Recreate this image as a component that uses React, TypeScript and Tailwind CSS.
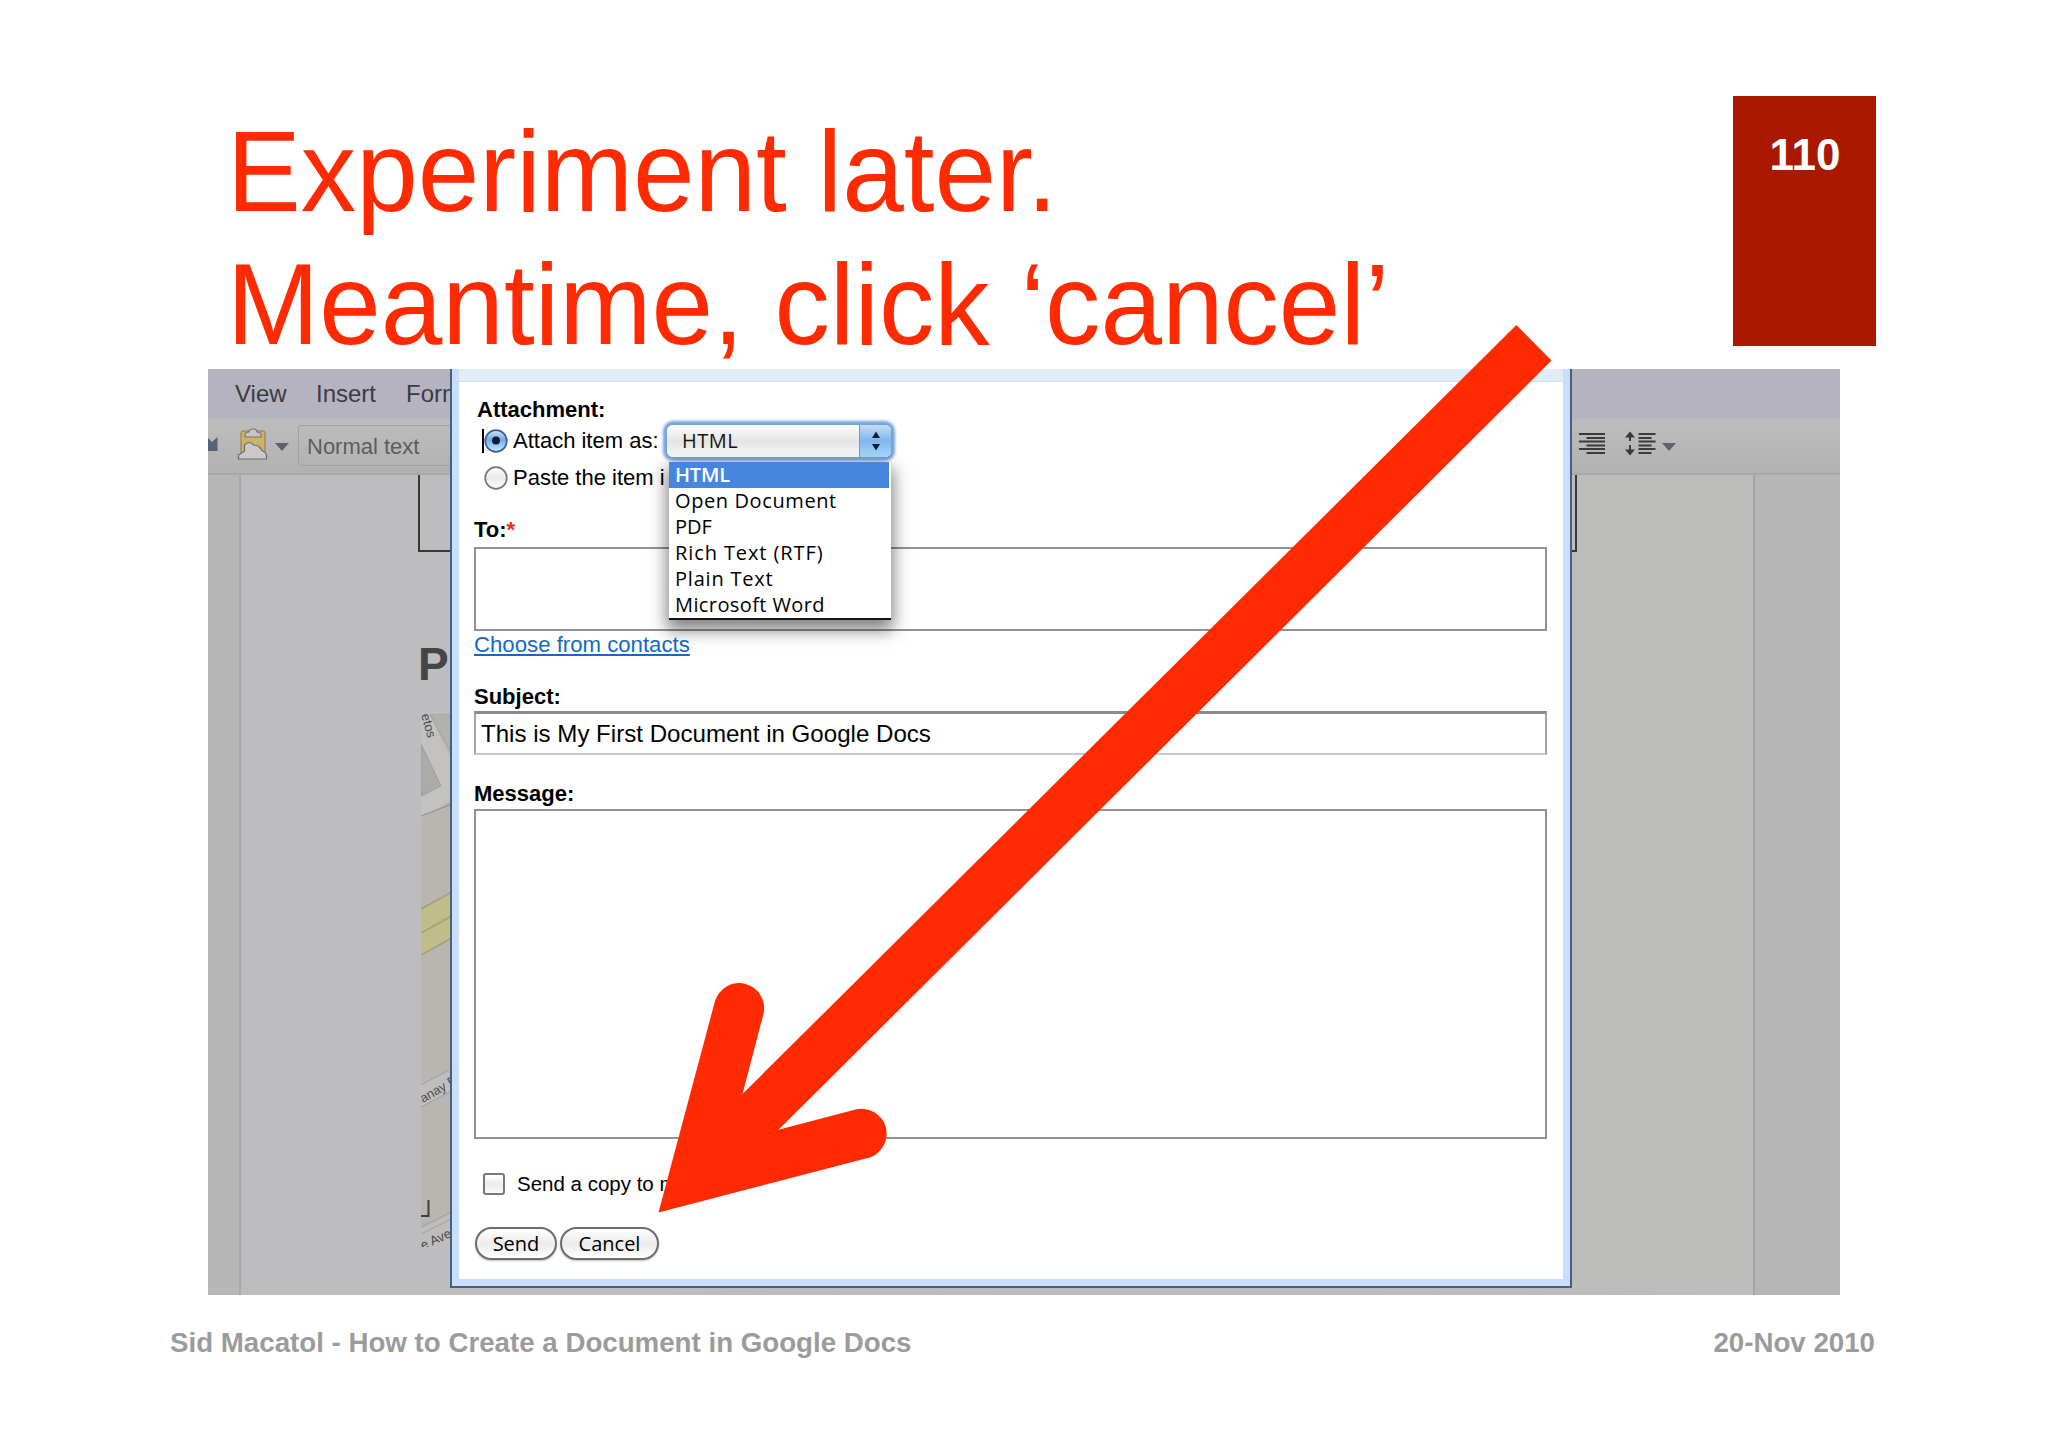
import React from "react";

interface FieldLabelProps {
  children: React.ReactNode;
  className?: string;
}

const FORMATS = [
  "HTML",
  "Open Document",
  "PDF",
  "Rich Text (RTF)",
  "Plain Text",
  "Microsoft Word",
];

const FORMAT_SPACING = [
  "tracking-[-0.2px]",
  "tracking-[0.6px]",
  "tracking-[0px]",
  "tracking-[0.9px]",
  "tracking-[0.8px]",
  "tracking-[0.4px]",
];

const FieldLabel: React.FC<FieldLabelProps> = ({ children, className }) => (
  <div
    className={`h-[26px] text-[22px] leading-[26px] font-bold text-black ${className ?? ""}`}
  >
    {children}
  </div>
);

const Radio: React.FC<{ checked?: boolean }> = ({ checked }) => (
  <svg width="26" height="26" viewBox="0 0 26 26" className="shrink-0">
    <defs>
      <linearGradient id="radioOn" x1="0" y1="0" x2="0" y2="1">
        <stop offset="0" stopColor="#d3e4f8" />
        <stop offset="0.45" stopColor="#6fabe8" />
        <stop offset="1" stopColor="#c4f0ff" />
      </linearGradient>
      <linearGradient id="radioOff" x1="0" y1="0" x2="0" y2="1">
        <stop offset="0" stopColor="#ffffff" />
        <stop offset="0.5" stopColor="#e9e9e9" />
        <stop offset="1" stopColor="#ffffff" />
      </linearGradient>
    </defs>
    <circle
      cx="13"
      cy="13"
      r="10.8"
      fill={checked ? "url(#radioOn)" : "url(#radioOff)"}
      stroke={checked ? "#44608e" : "#777777"}
      strokeWidth="1.7"
    />
    {checked && <circle cx="13" cy="12.5" r="4" fill="#101b30" />}
  </svg>
);

const MenuBar = () => (
  <div className="flex h-[50px] bg-[#b4b3bf] pl-[27px] pt-[11px] text-[24px] leading-[28px] text-[#3c3c40]">
    <span className="w-[81px]">View</span>
    <span className="w-[90px]">Insert</span>
    <span>Format</span>
  </div>
);

const Toolbar = () => (
  <div className="flex h-[56px] items-start justify-between border-b-2 border-[#a8a8a8] bg-linear-to-b from-[#bebdbd] to-[#b1b1b1]">
    <div className="flex items-start">
      <svg width="90" height="54" viewBox="0 0 90 54">
        <path d="M0 19 L4 23 L9.500 18 V32 H0 Z" fill="#56627a" />
        <rect x="33" y="12" width="24" height="24" rx="2" fill="#cfb266" stroke="#8a7a52" />
        <path
          d="M37 18 v-3 q1 -2 4 -2 q0 -3 4 -3 t4 3 q3 0 4 2 v3 z"
          fill="#c6c6c8"
          stroke="#77777c"
          strokeWidth="1.200"
        />
        <path
          d="M30.500 40 v-4 l6 -4 v-6 q5 -5 9 0 q6 0 8 5 q4 2 5 5 v4 z"
          fill="#c9c9cb"
          stroke="#6a6a70"
          strokeWidth="1.200"
        />
        <path d="M67 24 h14 l-7 8 z" fill="#596074" />
      </svg>
      <div className="mt-[6px] h-[41px] w-[180px] rounded-[3px] border border-[#a2a2a2] pl-[8px] text-[22px] leading-[41px] text-[#5d5d5f]">
        Normal text
      </div>
    </div>
    <svg width="264" height="54" viewBox="0 0 264 54" className="shrink-0">
      <g stroke="#3b3b3b" strokeWidth="2">
        <path d="M3 15h26M10.500 19h18.500M3 22.500h26M10.500 26.500h18.500M3 30h26M10.500 34h18.500" />
        <path d="M62.500 15h17M62.500 19h13M62.500 22.500h17M62.500 26.500h13M62.500 30h17M62.500 34h13" />
        <path d="M54 15v7M54 26v8" />
      </g>
      <path d="M49 18.500l5 -6 5 6zM49 30.500l5 6 5 -6z" fill="#3b3b3b" />
      <path d="M86 24 h14 l-7 8 z" fill="#5f6070" />
    </svg>
  </div>
);

const MapPicture = () => (
  <svg width="60" height="533" viewBox="0 0 60 533" className="block">
    <rect width="60" height="533" fill="#b9b6b2" />
    <path d="M0 0 h8 l30 60 v22 l-38 22 z" fill="#c4c2c1" />
    <path d="M9 0 h30 v55 z" fill="#b3b1ad" stroke="#a4a29e" />
    <path d="M0 30 l20 42 -20 10 z" fill="#acaba8" stroke="#9f9e9b" />
    <path d="M0 102 l36 -14" stroke="#8d8c8a" fill="none" />
    <path d="M0 195 l36 -20 v46 l-36 20 z" fill="#bfbd88" />
    <path d="M0 195 l36 -20 M0 219 l36 -20 M0 241 l36 -20" stroke="#a19f80" strokeWidth="1.500" fill="none" />
    <path d="M0 371 l36 -19 v22 l-36 19 z" fill="#c0bebc" />
    <path d="M0 371 l36 -19 M0 393 l36 -19" stroke="#a19f9d" fill="none" />
    <path d="M0 515 l36 -18 v36 h-36 z" fill="#bfbdbc" />
    <path d="M0 513 l36 -18 M0 520 l36 -18" stroke="#a19f9d" fill="none" />
    <path d="M0 502 h7.500 v-16" stroke="#3f3f3f" strokeWidth="2" fill="none" />
    <g fill="#4c4c4c" fontFamily="Liberation Sans, sans-serif" fontSize="13">
      <text transform="translate(0 1) rotate(74)">etos</text>
      <text transform="translate(2 389) rotate(-30)">anay E</text>
      <text transform="translate(2 536) rotate(-25)">e Ave</text>
    </g>
  </svg>
);

const DocumentPage = () => (
  <div className="flex h-[820px]">
    <div className="w-[33px] shrink-0 border-r-2 border-[#a9a9ab] bg-[#b7b7b7]" />
    <div className="w-[1514px] shrink-0 border-r-2 border-[#a3a3a3] bg-linear-to-r from-[#bdbdbf] via-[#bdbbbd] to-[#bdbdbb] pl-[177px]">
      <div className="h-[77px] w-[1159px] border-x-2 border-b-2 border-[#383838]" />
      <div className="mt-[86px] h-[52px] text-[46px] leading-[52px] font-bold text-[#444546]">
        P
      </div>
      <div className="mt-[24px] pl-[3px]">
        <MapPicture />
      </div>
    </div>
    <div className="flex-1 bg-[#b6b6b6]" />
  </div>
);

const FormatSelect = () => (
  <div className="relative ml-[8px] h-[32px] w-[224px]">
    <div className="flex h-[32px] overflow-hidden rounded-[6px] bg-linear-to-b from-[#fdfdfd] via-[#e4e4e4] to-[#fafafa] shadow-[0_0_3px_4px_#74a3d8]">
      <span className="flex-1 pl-[15px] font-['Open_Sans',sans-serif] text-[20px] leading-[31px] tracking-[0.5px] text-[#151515]">
        HTML
      </span>
      <span className="flex w-[32px] items-center justify-center border-l border-[#6d9bcc] bg-linear-to-b from-[#c3dcf6] via-[#7fb5ec] to-[#a9dcfd]">
        <svg width="10" height="20" viewBox="0 0 10 20">
          <path d="M5 0.500 L9 7 H1 Z M5 19.500 L9 13 H1 Z" fill="#14202e" />
        </svg>
      </span>
    </div>
    <ul className="absolute top-[37px] left-[2px] z-10 h-[158px] w-[222px] border-b-2 border-[#151515] bg-white pr-[2px] shadow-[0_8px_16px_2px_rgba(0,0,0,0.5)]">
      {FORMATS.map((format, i) => (
        <li
          key={format}
          className={`h-[26px] pl-[6px] font-['Open_Sans',sans-serif] text-[20px] leading-[26px] whitespace-nowrap ${FORMAT_SPACING[i]} ${
            i === 0 ? "bg-[#4786df] font-semibold text-white" : "text-black"
          }`}
        >
          {format}
        </li>
      ))}
    </ul>
  </div>
);

const AquaButton: React.FC<{ label: string; className: string }> = ({
  label,
  className,
}) => (
  <button
    className={`h-[33px] rounded-full border-2 border-[#6c6c6c] bg-linear-to-b from-[#ffffff] via-[#ebebeb] to-[#ffffff] font-['Open_Sans',sans-serif] text-[20px] leading-[28px] text-black shadow-[0_1px_2px_rgba(0,0,0,0.25)] ${className}`}
  >
    {label}
  </button>
);

const EmailDialog = () => (
  <div className="absolute top-0 left-[242px] h-[919px] w-[1122px] border-x-2 border-b-2 border-[#44617f] bg-[#c9ddff]">
    <div className="mx-[7px] h-[13px] border-b border-[#c9dcfa] bg-[#e2ecf7]" />
    <div className="mx-[7px] h-[897px] bg-white pt-[15px] pr-[16px] pl-[15px] text-[22px] text-black">
      <FieldLabel className="pl-[3px]">Attachment:</FieldLabel>
      <div className="mt-[2px] flex h-[32px] items-center pl-[8px]">
        <span className="h-[24px] w-[2px] bg-black" />
        <span className="-ml-[1px] flex">
          <Radio checked />
        </span>
        <span className="ml-[4px] w-[146px] leading-[26px] whitespace-nowrap">
          Attach item as:
        </span>
        <FormatSelect />
      </div>
      <div className="mt-[8px] flex h-[26px] items-center pl-[9px]">
        <Radio />
        <span className="ml-[4px] w-[152px] overflow-hidden leading-[26px] whitespace-nowrap">
          Paste the item itself
        </span>
      </div>

      <FieldLabel className="mt-[26px]">
        To:<span className="text-[#f02a10]">*</span>
      </FieldLabel>
      <div className="mt-[4px] h-[84px] border-2 border-[#929292]" />
      <a className="mt-[1px] block h-[26px] text-[22.2px] leading-[26px] text-[#1668c4] underline decoration-2 underline-offset-[2px]">
        Choose from contacts
      </a>

      <FieldLabel className="mt-[26px]">Subject:</FieldLabel>
      <div className="mt-[1px] h-[44px] border-2 border-t-[3px] border-[#c8c8c8] border-t-[#8b8b8b] border-l-[#a5a5a5] border-r-[#a5a5a5] pl-[5px] text-[24.1px] leading-[40px]">
        This is My First Document in Google Docs
      </div>

      <FieldLabel className="mt-[26px]">Message:</FieldLabel>
      <div className="mt-[2px] h-[330px] border-2 border-[#929292]" />

      <div className="mt-[32px] flex h-[26px] items-center pl-[9px]">
        <span className="h-[22px] w-[22px] rounded-[3px] border-2 border-[#777777] bg-linear-to-b from-[#ffffff] via-[#ececec] to-[#fafafa]" />
        <span className="ml-[12px] text-[20.5px] leading-[26px]">
          Send a copy to myself
        </span>
      </div>
      <div className="mt-[30px] flex gap-[3px] pl-[1px]">
        <AquaButton label="Send" className="w-[82px]" />
        <AquaButton label="Cancel" className="w-[99px]" />
      </div>
    </div>
  </div>
);

const Arrow = () => (
  <svg
    className="pointer-events-none absolute top-0 left-0"
    width="2048"
    height="1447"
    viewBox="0 0 2048 1447"
  >
    <path
      d="M658.500 1212.500 L714.800 1001.700 A25 25 0 0 1 763.300 1014.700 L742.500 1094 L1516.300 325 L1551.500 360.600 L778.500 1129.800 L856.500 1109.300 A25 25 0 0 1 869.500 1157.500 Z"
      fill="#ff2a00"
    />
  </svg>
);

export default function App() {
  return (
    <div className="relative h-[1447px] w-[2048px] overflow-hidden bg-white font-['Liberation_Sans',Arial,sans-serif]">
      <header className="flex h-[369px] justify-between pl-[227px] pr-[172px]">
        <h1 className="origin-top-left scale-y-[1.04] pt-[101px] text-[110.7px] leading-[128.4px] whitespace-nowrap text-[#ff2a00]">
          Experiment later.
          <br />
          Meantime, click ‘cancel’
        </h1>
        <div className="mt-[96px] h-[250px] w-[143px] bg-[#ab1800] pt-[34px] pl-[1px] text-center text-[44px] leading-[50px] font-bold text-white">
          110
        </div>
      </header>

      <main className="relative ml-[208px] h-[926px] w-[1632px] overflow-hidden">
        <MenuBar />
        <Toolbar />
        <DocumentPage />
        <EmailDialog />
      </main>

      <footer className="flex justify-between pt-[32px] pr-[173px] pl-[170px] text-[27.7px] leading-[32px] font-bold text-[#9b9b9b]">
        <span>Sid Macatol - How to Create a Document in Google Docs</span>
        <span>20-Nov 2010</span>
      </footer>

      <Arrow />
    </div>
  );
}
